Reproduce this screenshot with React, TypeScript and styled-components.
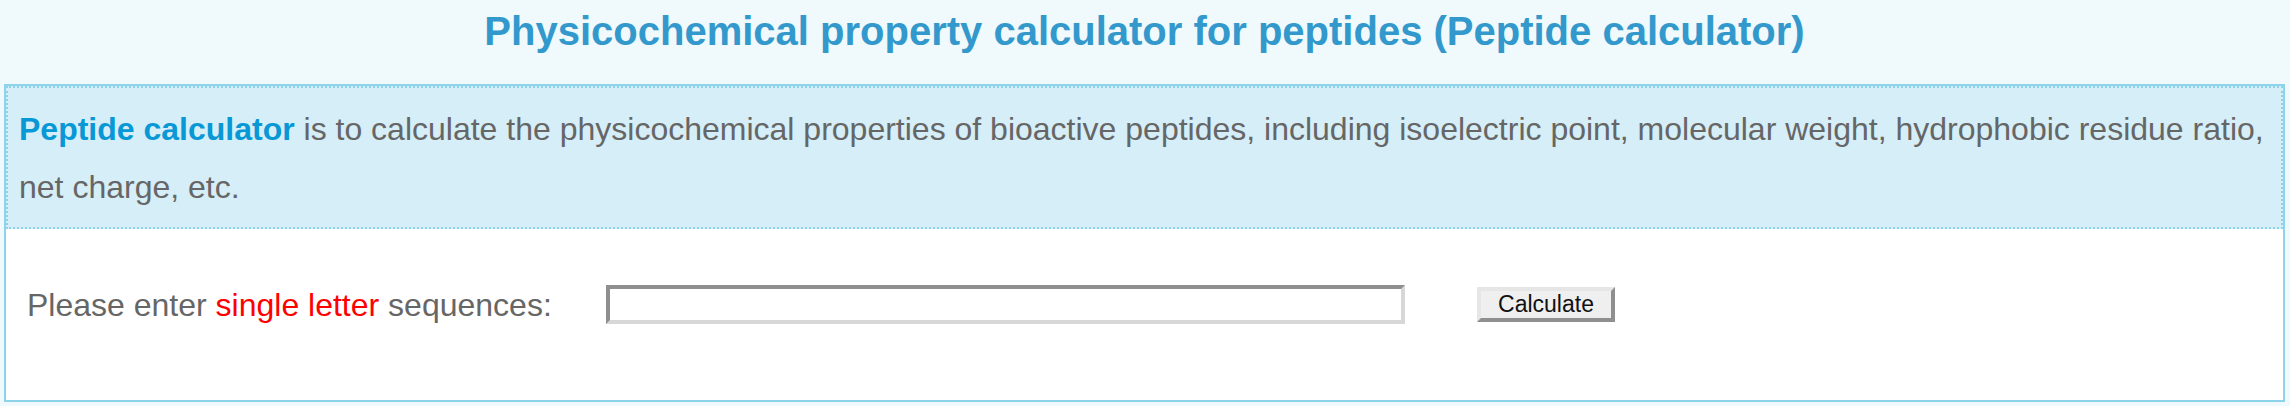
import styled, { createGlobalStyle } from "styled-components";

const GlobalStyle = createGlobalStyle`
  html, body {
    margin: 0;
    padding: 0;
    background: #f0f9fb;
    font-family: "Liberation Sans", Arial, Helvetica, sans-serif;
  }
`;

const Page = styled.div`
  width: 2290px;
  height: 406px;
  display: flex;
  flex-direction: column;
  box-sizing: border-box;
  padding: 0 5px 4px 4px;
`;

const Title = styled.h1`
  margin: 0;
  height: 84px;
  box-sizing: border-box;
  padding-top: 8px;
  text-align: center;
  font-size: 40px;
  line-height: 46px;
  font-weight: bold;
  color: #3399cc;
`;

const Panel = styled.section`
  flex: 1;
  display: flex;
  flex-direction: column;
  background: #ffffff;
  border: 2px solid #8dd4ea;
`;

const Intro = styled.p`
  margin: 0;
  padding: 12px 12px 11px 11px;
  background: #d5eef8;
  border: 2px dotted #8dd4ea;
  font-size: 32px;
  line-height: 58px;
  color: #666666;
`;

const Highlight = styled.strong`
  color: #0898d6;
`;

const Form = styled.form`
  flex: 1;
  display: grid;
  grid-template-columns: 507px 799px 138px;
  column-gap: 72px;
  align-items: center;
  align-content: start;
  padding: 56px 0 0 21px;
`;

const Label = styled.label`
  margin-top: 2px;
  font-size: 32px;
  color: #666666;
  white-space: nowrap;
`;

const Red = styled.span`
  color: #ff0000;
`;

const SeqInput = styled.input`
  width: 799px;
  height: 39px;
  box-sizing: border-box;
  margin: 0;
  background: #ffffff;
  border-style: solid;
  border-width: 4px;
  border-color: #8f8f8f #d7d7d7 #d7d7d7 #8f8f8f;
  font-size: 26px;
`;

const Button = styled.button`
  width: 138px;
  height: 35px;
  box-sizing: border-box;
  margin: 0;
  padding: 0;
  background: #efefef;
  border-style: solid;
  border-width: 4px;
  border-color: #e6e6e6 #8f8f8f #8f8f8f #e6e6e6;
  font-family: "Liberation Sans", Arial, sans-serif;
  font-size: 23px;
  line-height: 1;
  color: #111111;
`;

export default function App() {
  return (
    <>
      <GlobalStyle />
      <Page>
        <Title>Physicochemical property calculator for peptides (Peptide calculator)</Title>
        <Panel>
          <Intro>
            <Highlight>Peptide calculator</Highlight> is to calculate the physicochemical properties of
            bioactive peptides, including isoelectric point, molecular weight, hydrophobic residue
            ratio, net charge, etc.
          </Intro>
          <Form onSubmit={(e) => e.preventDefault()}>
            <Label htmlFor="seq">
              Please enter <Red>single letter</Red> sequences:
            </Label>
            <SeqInput id="seq" type="text" />
            <Button type="submit">Calculate</Button>
          </Form>
        </Panel>
      </Page>
    </>
  );
}
